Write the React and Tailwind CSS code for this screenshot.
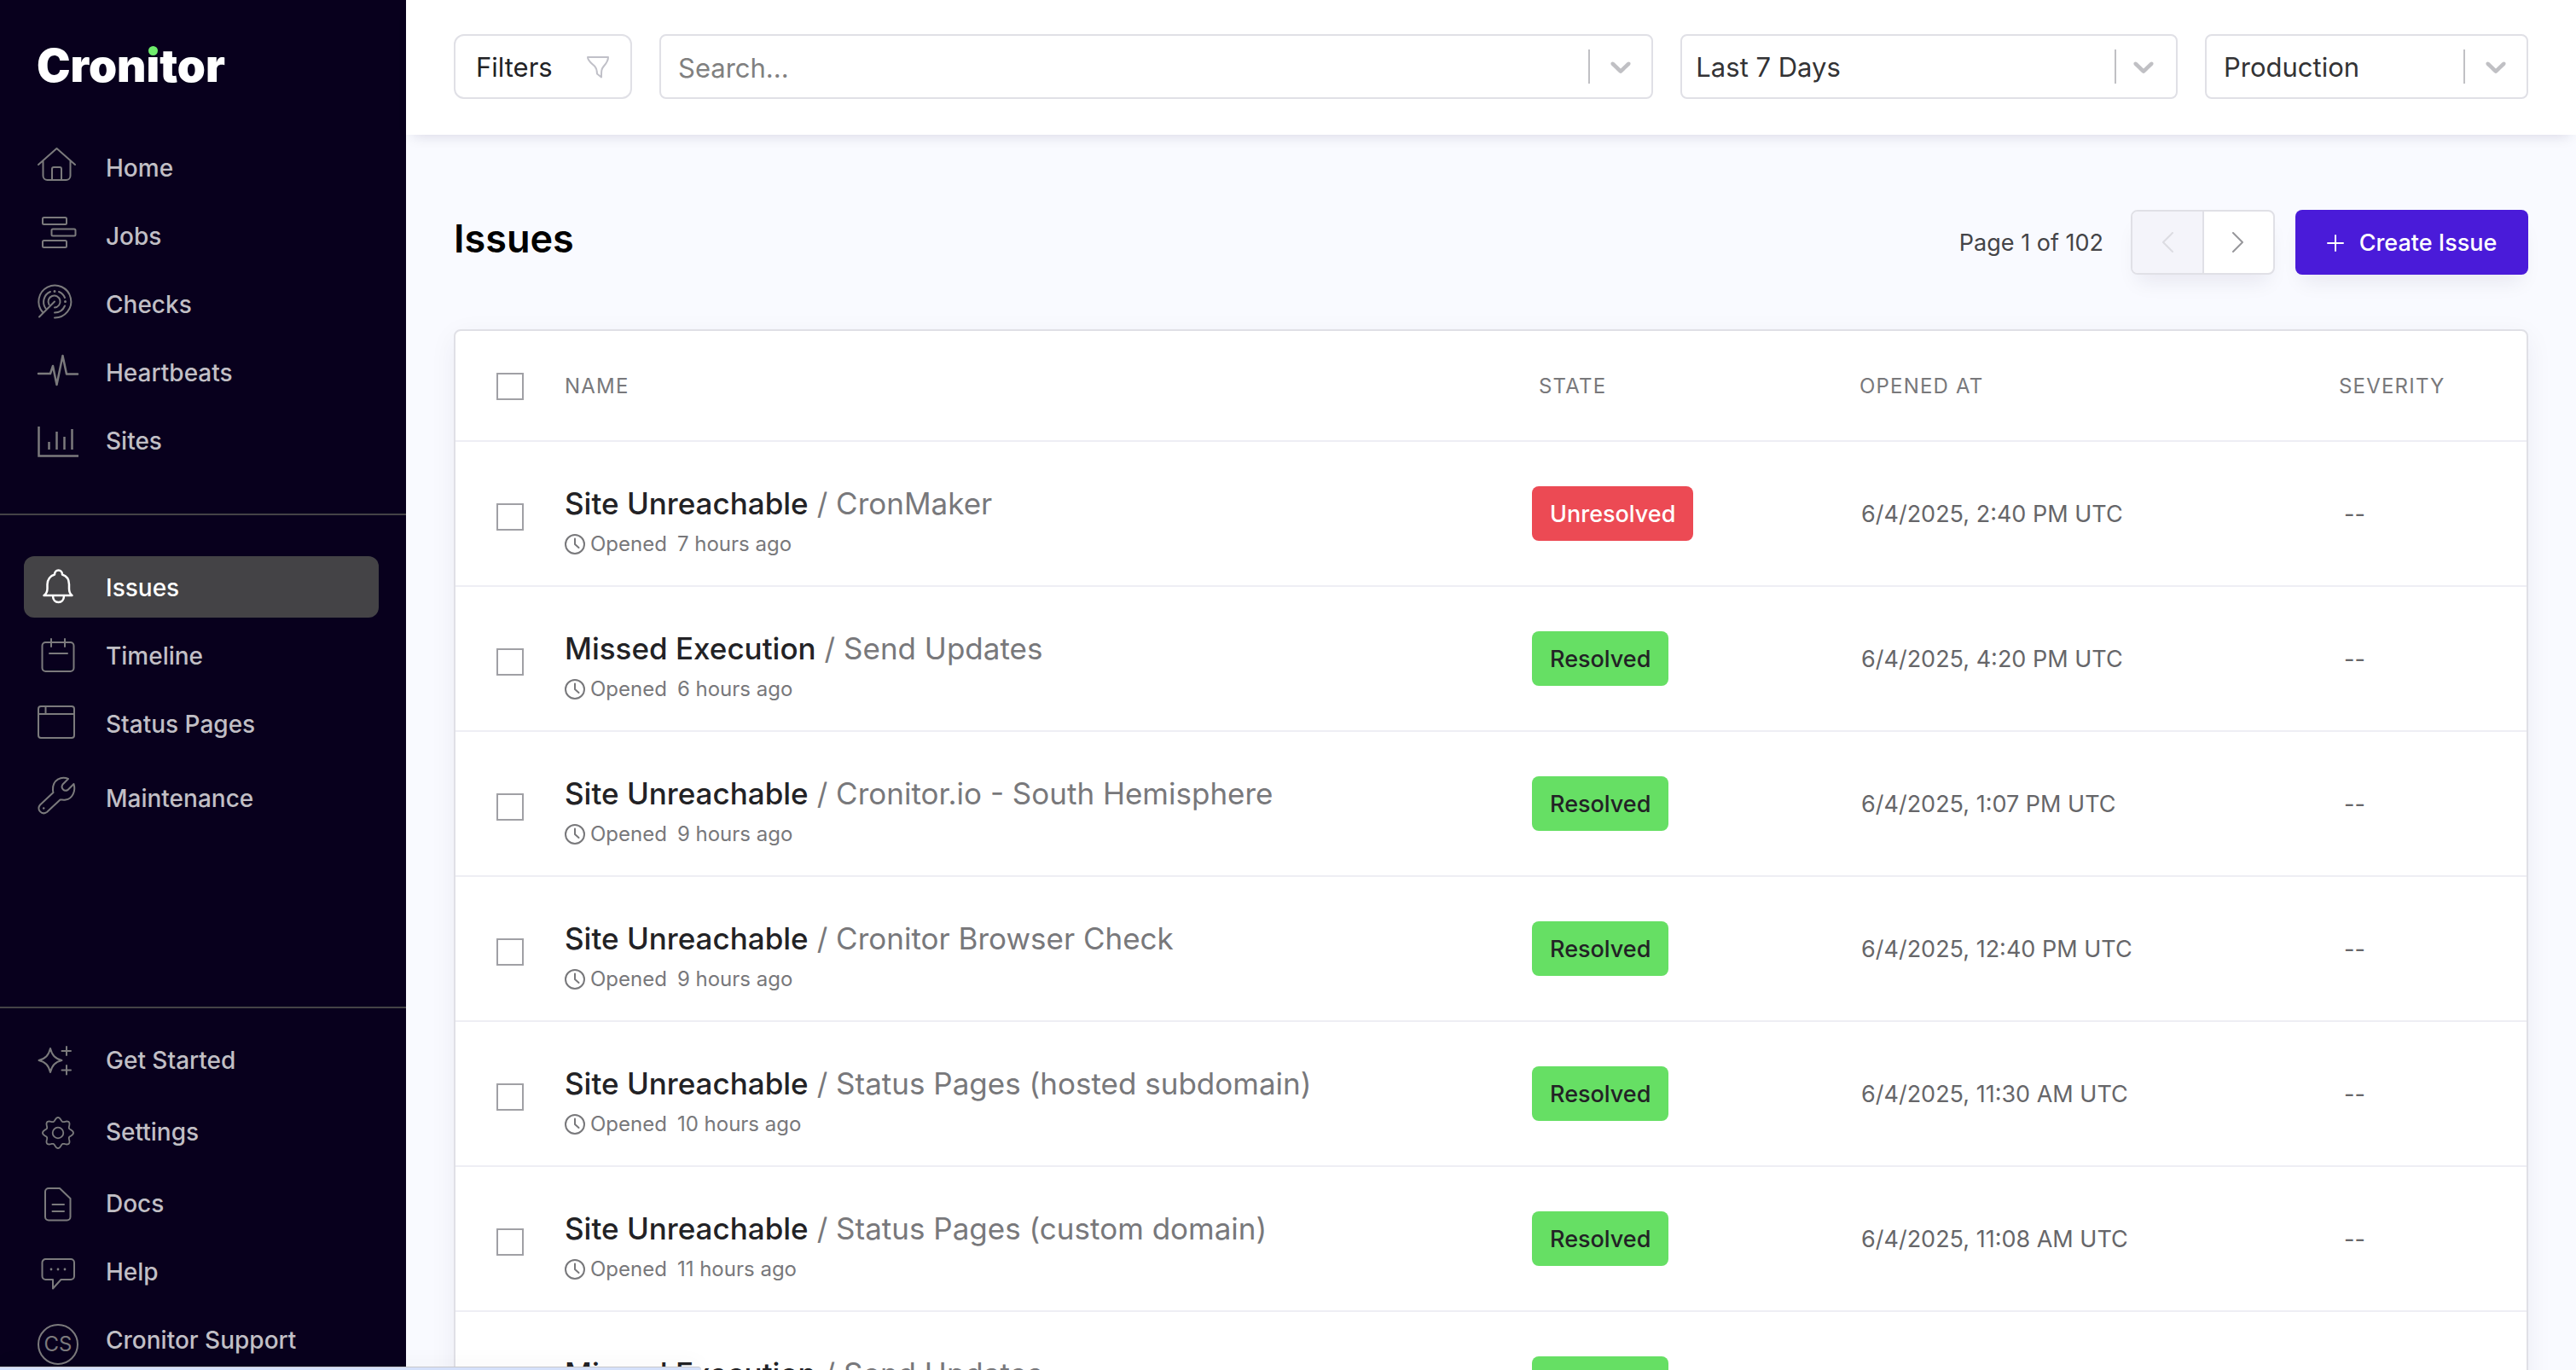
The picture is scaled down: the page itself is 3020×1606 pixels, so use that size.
import { useState } from 'react';

const icon = {
  fill: 'none',
  stroke: 'currentColor',
  strokeWidth: 2,
  strokeLinecap: 'round',
  strokeLinejoin: 'round',
  'aria-hidden': true
};

function HomeIcon() {
  return (
    <svg width="48" height="44" viewBox="0 3 48 44" {...icon} className="overflow-visible">
      <path d="M1 22 22.500 3 44 22M6.500 17.500V35a5 5 0 0 0 5 5h22a5 5 0 0 0 5-5V17.500M17 40V27a2 2 0 0 1 2-2h7a2 2 0 0 1 2 2v13" />
    </svg>
  );
}

function JobsIcon() {
  return (
    <svg width="48" height="44" viewBox="0 2 48 44" {...icon} className="overflow-visible">
      <rect x="6" y="3" width="28" height="8" rx="1.500" />
      <rect x="16.500" y="16.500" width="28" height="8" rx="1.500" />
      <rect x="6" y="30" width="28" height="8" rx="1.500" />
    </svg>
  );
}

function ChecksIcon() {
  return (
    <svg width="48" height="44" viewBox="0 2 48 44" {...icon} className="overflow-visible">
      <path d="M20 40.500A19 19 0 1 0 6 34M20 34.500A13 13 0 0 0 32 26.500M9.500 29.500A13 13 0 0 1 15 10M25 10A13 13 0 0 1 32 17M13.500 25A7 7 0 1 1 20 28.500M20 21.500 2 39.500" />
      <path d="M20 9.500h.01M32.500 21.500h.01" strokeWidth="3" />
    </svg>
  );
}

function HeartbeatsIcon() {
  return (
    <svg width="48" height="44" viewBox="0 0 48 44" {...icon} className="overflow-visible">
      <path d="M1 24H15L18 15 22.500 37 29.500 3 34 24.500H47" strokeWidth="2.500" />
    </svg>
  );
}

function SitesIcon() {
  return (
    <svg width="48" height="44" viewBox="0 -1 48 44" {...icon} strokeLinecap="butt" strokeLinejoin="miter">
      <path d="M1.500 5V39.500H48M13.500 23V32M22.500 11V32M31.500 17V32M40.500 8V32" strokeWidth="2.500" />
    </svg>
  );
}

function BellIcon() {
  return (
    <svg width="48" height="44" viewBox="0 0 48 44" {...icon} strokeWidth="2.500">
      <path d="M7.500 32h33c-3-2-3.500-4-3.500-8v-5c0-6-3.500-10-8-11.500 0-3-2-5-4.500-5s-4.500 2-4.500 5c-5 1.500-8.500 6-8.500 11.500v5c0 4-1 6-4 8ZM18 32.500c0 5 3 7.500 6.500 7.500s6.500-2.500 6.500-7.500" />
    </svg>
  );
}

function TimelineIcon() {
  return (
    <svg width="48" height="44" viewBox="0 0 48 44" {...icon}>
      <rect x="5.500" y="7" width="37" height="34" rx="4" />
      <path d="M16 3v9M32 3v9M14 20h21" />
    </svg>
  );
}

function StatusIcon() {
  return (
    <svg width="48" height="44" viewBox="0 0 48 44" {...icon}>
      <rect x="1" y="2" width="42" height="37" rx="3" />
      <path d="M1 11h42M9.500 2v9" />
    </svg>
  );
}

function WrenchIcon() {
  return (
    <svg width="48" height="44" viewBox="0 3 48 44" {...icon} className="overflow-visible">
      <path d="M36 3C28-.5 17.500 4 18 16c0 1.500.2 2.500.5 3L3 33.500C-1.500 39 5 46 11 42L26.500 27.500c2.500 0 4 .5 6.500 0C41 26.500 45 17 42.500 9L35.500 16c-2 1-4 1-5.500-.5-1.500-1.500-1.800-4-.5-6Z" />
      <path d="M7.200 37.500h.01" strokeWidth="2.500" />
    </svg>
  );
}

function SparklesIcon() {
  return (
    <svg width="48" height="44" viewBox="0 0 48 44" {...icon}>
      <path d="M15 9c2 8 5.500 12 13.500 14-8 2-11.500 6-13.500 14C13 29 9.500 25 1.500 23 9.500 21 13 17 15 9ZM34 7v10M28.500 12h10.500M34 29v10.500M28.500 34.500h10.500" />
    </svg>
  );
}

// Eight rounded teeth, traced around the hub.
const gearOutline = Array.from({ length: 144 }, (_, i) => {
  const angle = (i / 144) * Math.PI * 2;
  const radius = 16 + 2 * Math.cos(8 * angle);
  return `${(24 + radius * Math.cos(angle)).toFixed(2)},${(24 + radius * Math.sin(angle)).toFixed(2)}`;
}).join(' ');

function GearIcon() {
  return (
    <svg width="48" height="44" viewBox="0 0 48 44" {...icon} strokeWidth="1.800">
      <circle cx="24" cy="24" r="6.300" />
      <polygon points={gearOutline} />
    </svg>
  );
}

function DocsIcon() {
  return (
    <svg width="48" height="44" viewBox="0 0 48 44" {...icon}>
      <path d="M13 5h13l12.500 12v21.500a4 4 0 0 1-4 4H13a4 4 0 0 1-4-4V9a4 4 0 0 1 4-4ZM17.500 24h13.500M17.500 32h13.500" />
    </svg>
  );
}

function HelpIcon() {
  return (
    <svg width="48" height="44" viewBox="0 0 48 44" {...icon}>
      <path d="M9.500 8h29.500a4 4 0 0 1 4 4v16a4 4 0 0 1-4 4H27.500L18 42.500V32H9.500a4 4 0 0 1-4-4V12a4 4 0 0 1 4-4Z" />
      <path d="M16 20h.01M24 20h.01M32 20h.01" strokeWidth="2.800" />
    </svg>
  );
}

function ChevronDown() {
  return (
    <svg width="40" height="40" viewBox="0 0 20 20" fill="currentColor" aria-hidden="true">
      <path d="M4.516 7.548c0.436-0.446 1.043-0.481 1.576 0l3.908 3.747 3.908-3.747c0.533-0.481 1.141-0.446 1.574 0 0.436 0.445 0.408 1.197 0 1.615-0.406 0.418-4.695 4.502-4.695 4.502-0.217 0.223-0.502 0.335-0.787 0.335s-0.570-0.112-0.789-0.335c0 0-4.287-4.084-4.695-4.502s-0.436-1.170 0-1.615z" />
    </svg>
  );
}

function ClockIcon() {
  return (
    <svg width="24" height="24" viewBox="0 0 24 24" {...icon}>
      <circle cx="12" cy="12" r="11" />
      <path d="M12 5.500V12l4.500 4" />
    </svg>
  );
}

const mainLinks = [
  { label: 'Home', Icon: HomeIcon },
  { label: 'Jobs', Icon: JobsIcon },
  { label: 'Checks', Icon: ChecksIcon },
  { label: 'Heartbeats', Icon: HeartbeatsIcon },
  { label: 'Sites', Icon: SitesIcon }
];

const issueLinks = [
  { label: 'Issues', Icon: BellIcon, active: true },
  { label: 'Timeline', Icon: TimelineIcon },
  { label: 'Status Pages', Icon: StatusIcon },
  { label: 'Maintenance', Icon: WrenchIcon, size: 'h-[86px]' }
];

const footerLinks = [
  { label: 'Get Started', Icon: SparklesIcon },
  { label: 'Settings', Icon: GearIcon, size: 'h-20' },
  { label: 'Docs', Icon: DocsIcon },
  { label: 'Help', Icon: HelpIcon }
];

const issues = [
  { type: 'Site Unreachable', source: 'CronMaker', opened: '7 hours ago', state: 'Unresolved', date: '6/4/2025, 2:40 PM UTC' },
  { type: 'Missed Execution', source: 'Send Updates', opened: '6 hours ago', state: 'Resolved', date: '6/4/2025, 4:20 PM UTC' },
  { type: 'Site Unreachable', source: 'Cronitor.io - South Hemisphere', opened: '9 hours ago', state: 'Resolved', date: '6/4/2025, 1:07 PM UTC' },
  { type: 'Site Unreachable', source: 'Cronitor Browser Check', opened: '9 hours ago', state: 'Resolved', date: '6/4/2025, 12:40 PM UTC' },
  { type: 'Site Unreachable', source: 'Status Pages (hosted subdomain)', opened: '10 hours ago', state: 'Resolved', date: '6/4/2025, 11:30 AM UTC' },
  { type: 'Site Unreachable', source: 'Status Pages (custom domain)', opened: '11 hours ago', state: 'Resolved', date: '6/4/2025, 11:08 AM UTC' },
  { type: 'Missed Execution', source: 'Send Updates', opened: '12 hours ago', state: 'Resolved', date: '6/4/2025, 10:20 AM UTC' }
];

function NavItem({ label, Icon, active, size = 'h-[72px]' }) {
  const tone = active ? 'bg-[#444346] text-white' : 'text-[#7b7a7c]';
  return (
    <li>
      <a href="#" className={`flex items-center rounded-xl pl-4 ${size} ${tone}`}>
        <span className="w-20 shrink-0">
          <Icon />
        </span>
        <span className={`pt-0.5 ${active ? 'text-white' : 'text-[#c1bfc5]'}`}>{label}</span>
      </a>
    </li>
  );
}

function NavList({ links, children }) {
  return (
    <ul className="flex flex-col gap-2 pl-7 pr-8 text-[28px] leading-8 font-medium">
      {links.map((link) => (
        <NavItem key={link.label} {...link} />
      ))}
      {children}
    </ul>
  );
}

function Logo() {
  return (
    <a href="#" className="ml-[43px] mt-[51px] self-start text-[53px] leading-[52px] font-black text-white">
      Cron
      <span className="relative inline-block">
        i
        {/* green tittle over the i */}
        <span className="absolute inset-x-0 top-0 flex h-[15px] justify-center bg-[#08001d] pt-[3px]">
          <span className="size-[11px] rounded-full bg-[#6fec6c]" />
        </span>
      </span>
      tor
    </a>
  );
}

function Sidebar() {
  return (
    <aside className="flex w-[476px] shrink-0 flex-col overflow-hidden bg-[#08001d]">
      <Logo />
      <nav className="mt-[57px] flex flex-1 flex-col">
        <NavList links={mainLinks} />
        <hr className="mb-12 mt-[50px] border-t-2 border-[#444346]" />
        <NavList links={issueLinks} />
        <hr className="mb-6 mt-auto border-t-2 border-[#444346]" />
        <NavList links={footerLinks}>
          <li>
            <a href="#" className="flex h-[72px] items-center pl-4 text-[#7b7a7c]">
              <span className="w-20 shrink-0 self-end pb-1.5">
                <span className="flex size-12 items-center justify-center rounded-full border-2 border-[#7b7a7c] text-[24px] font-normal">CS</span>
              </span>
              <span className="pt-0.5 text-[#c1bfc5]">Cronitor Support</span>
            </a>
          </li>
        </NavList>
      </nav>
    </aside>
  );
}

function SelectArrow({ spacing = 'px-4' }) {
  return (
    <span className="pointer-events-none flex shrink-0 items-center text-[#c0c0c4]">
      <span className="h-10 w-0.5 bg-[#c0c0c4]" />
      <span className={spacing}>
        <ChevronDown />
      </span>
    </span>
  );
}

function SelectBox({ label, value, padding, spacing }) {
  return (
    <div className="flex h-[76px] items-center rounded-lg border-2 border-[#e0e0e6] bg-white">
      <select
        aria-label={label}
        className={`h-full w-full appearance-none bg-transparent pt-0.5 text-[31px] text-[#333335] outline-none ${padding}`}
      >
        <option>{value}</option>
      </select>
      <SelectArrow spacing={spacing} />
    </div>
  );
}

function TopBar() {
  const [query, setQuery] = useState('');
  return (
    <header className="relative z-10 grid shrink-0 grid-cols-[209px_2fr_1fr_379px] gap-8 bg-white px-14 pb-[42px] pt-10 shadow-[0_8px_16px_-8px_rgba(20,10,60,0.16)]">
      <button type="button" className="flex h-[76px] items-center justify-between rounded-xl border-2 border-[#e0e0e6] px-6 pt-0.5 text-[31px] text-[#222225]">
        Filters
        <svg width="28" height="28" viewBox="0 0 28 28" {...icon} className="text-[#c0c0c8]">
          <path d="M2 2h24c0 5-2.500 7.500-5.500 11-2.500 3-2.500 5-2.500 12.500l-5-4c0-4-.5-6-2.500-8.500C6.500 9 2 6.500 2 2Z" />
        </svg>
      </button>
      <div className="flex h-[76px] items-center rounded-lg border-2 border-[#e0e0e6]">
        <input
          type="text"
          aria-label="Search"
          placeholder="Search..."
          value={query}
          onChange={(e) => setQuery(e.target.value)}
          className="h-full min-w-0 flex-1 px-5 pt-0.5 text-[31px] outline-none placeholder:text-[#808080]"
        />
        <SelectArrow />
      </div>
      <SelectBox label="Time range" value="Last 7 Days" padding="px-4" spacing="pl-3 pr-[18px]" />
      <SelectBox label="Environment" value="Production" padding="px-5" />
    </header>
  );
}

function TitleRow() {
  return (
    <div className="flex items-center">
      <h1 className="flex-1 pb-2 text-[45px] leading-[56px] font-semibold text-black">Issues</h1>
      <span className="pt-0.5 text-[27px] text-[#444447]">Page 1 of 102</span>
      <div className="ml-8 flex h-[76px] w-[169px] overflow-hidden rounded-lg border-2 border-[#e0e0e6] bg-white shadow-[0_16px_24px_-8px_rgba(20,10,60,0.08)]">
        <button type="button" aria-label="Previous page" disabled className="flex flex-1 items-center justify-center border-r-2 border-[#e0e0e6] bg-[#f4f4fa] text-[#dcdce2]">
          <svg width="14" height="24" viewBox="0 0 14 24" {...icon}>
            <path d="M13 1 2 12l11 11" />
          </svg>
        </button>
        <button type="button" aria-label="Next page" className="flex flex-1 items-center justify-center text-[#97979b]">
          <svg width="14" height="24" viewBox="0 0 14 24" {...icon}>
            <path d="m1 1 11 11L1 23" />
          </svg>
        </button>
      </div>
      <button type="button" className="ml-6 flex h-[76px] w-[273px] items-center justify-center gap-[18px] rounded-lg bg-[#4a1bd9] pt-0.5 text-[27px] font-medium text-white shadow-[0_16px_24px_-8px_rgba(20,10,60,0.08)]">
        <svg width="20" height="20" viewBox="0 0 20 20" {...icon}>
          <path d="M10 1v18M1 10h18" />
        </svg>
        Create Issue
      </button>
    </div>
  );
}

function Checkbox({ label }) {
  return (
    <input
      type="checkbox"
      aria-label={label}
      className="block size-8 appearance-none border-2 border-[#a0a0a5] bg-white checked:bg-[#4a1bd9]"
    />
  );
}

function IssueRow({ issue }) {
  const badge = issue.state === 'Resolved' ? 'bg-[#66df64] text-[#222225]' : 'bg-[#ec4a54] text-white';
  return (
    <tr>
      <td className="border-b-2 border-[#eeeef4] pl-12 pt-2">
        <Checkbox label={`Select ${issue.type}`} />
      </td>
      <td className="border-b-2 border-[#eeeef4] pb-8 pt-12">
        <div className="flex gap-2.5 text-[35px] leading-[48px]">
          <a href="#" className="font-medium text-[#222225]">{issue.type}</a>
          <span className="text-[#78787b]">/ {issue.source}</span>
        </div>
        <div className="mt-2 flex items-center text-[24px] leading-8 text-[#78787b]">
          <ClockIcon />
          <span className="ml-1.5">Opened</span>
          <span className="ml-3">{issue.opened}</span>
        </div>
      </td>
      <td className="border-b-2 border-[#eeeef4]">
        <span className={`inline-flex h-16 items-center rounded-lg px-[21px] pt-0.5 text-[27px] font-medium ${badge}`}>{issue.state}</span>
      </td>
      <td className="border-b-2 border-[#eeeef4] pl-0.5 pt-0.5 text-[27px] text-[#666669]">{issue.date}</td>
      <td className="border-b-2 border-[#eeeef4] pl-1.5 pt-0.5 text-[27px] text-[#666669]">--</td>
    </tr>
  );
}

function IssuesTable() {
  return (
    <div className="mt-16 rounded-lg border-2 border-[#e0e0e6] bg-white shadow-[0_8px_32px_rgba(20,10,60,0.06)]">
      <table className="w-full table-fixed border-separate border-spacing-0 text-left">
        <colgroup>
          <col className="w-32" />
          <col />
          <col className="w-[384px]" />
          <col className="w-[562px]" />
          <col className="w-[220px]" />
        </colgroup>
        <thead className="text-[24px] tracking-wider text-[#78787b] uppercase">
          <tr>
            <th className="h-[130px] border-b-2 border-[#eeeef4] pl-12 pt-0.5">
              <Checkbox label="Select all issues" />
            </th>
            <th className="border-b-2 border-[#eeeef4] pt-0.5 font-normal">Name</th>
            <th className="border-b-2 border-[#eeeef4] pl-2 pt-0.5 font-normal">State</th>
            <th className="border-b-2 border-[#eeeef4] pt-0.5 font-normal">Opened at</th>
            <th className="border-b-2 border-[#eeeef4] pt-0.5 font-normal">Severity</th>
          </tr>
        </thead>
        <tbody>
          {issues.map((issue, index) => (
            <IssueRow key={index} issue={issue} />
          ))}
        </tbody>
      </table>
    </div>
  );
}

export default function App() {
  return (
    <div className="relative flex h-screen overflow-hidden bg-[#f9faff] font-[Inter,sans-serif]">
      <Sidebar />
      <div className="flex min-w-0 flex-1 flex-col">
        <TopBar />
        <main className="min-h-0 flex-1 overflow-hidden px-14 pt-[88px]">
          <TitleRow />
          <IssuesTable />
        </main>
      </div>
      <div className="absolute bottom-0 left-0 z-20 h-1 w-[822px] rounded-tr-md border-t border-[#c8c8cc] bg-[#d5e1fa] shadow-[0_0_24px_rgba(0,0,0,0.12)]" />
    </div>
  );
}
